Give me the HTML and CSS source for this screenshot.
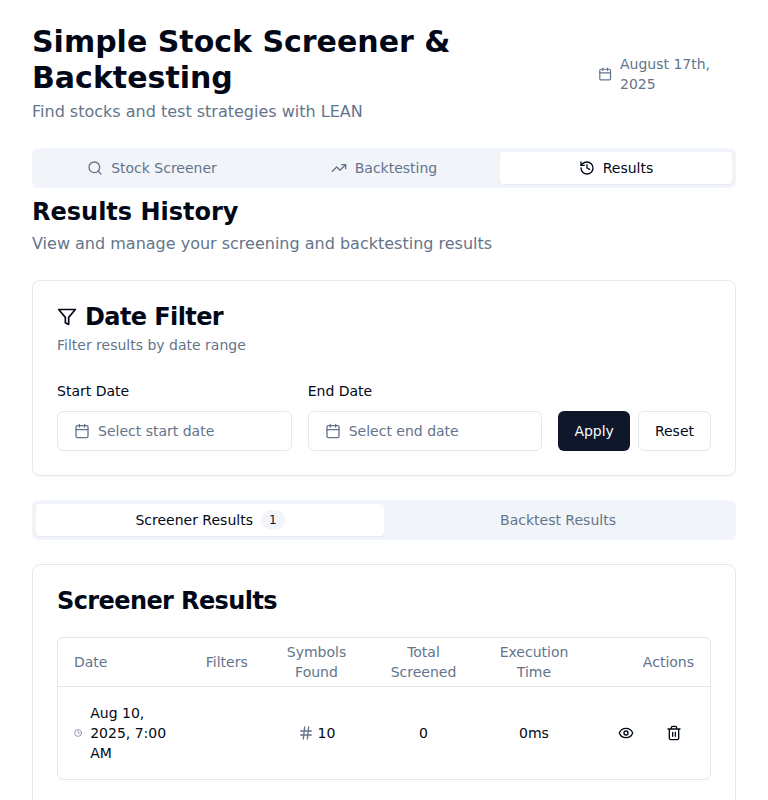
FILE: index.html
```html
<!DOCTYPE html>
<html lang="en">
<head>
<meta charset="utf-8">
<title>Simple Stock Screener &amp; Backtesting</title>
<link rel="stylesheet" href="styles.css">
</head>
<body>
<main class="page">
  <header class="header">
    <div class="heading">
      <h1>Simple Stock Screener &amp; Backtesting</h1>
      <p class="lead">Find stocks and test strategies with LEAN</p>
    </div>
    <div class="today">
      <svg class="icon icon-today" viewBox="0 0 24 24"><path d="M8 2v4M16 2v4"/><rect width="18" height="18" x="3" y="4" rx="2"/><path d="M3 10h18"/></svg>
      <span>August 17th, 2025</span>
    </div>
  </header>

  <nav class="tabs tabs-three">
    <button class="tab"><svg class="icon" viewBox="0 0 24 24"><circle cx="11" cy="11" r="8"/><path d="m21 21-4.3-4.3"/></svg>Stock Screener</button>
    <button class="tab"><svg class="icon" viewBox="0 0 24 24"><path d="M22 7 13.5 15.5 8.500 10.500 2 17"/><path d="M16 7h6v6"/></svg>Backtesting</button>
    <button class="tab active"><svg class="icon" viewBox="0 0 24 24"><path d="M3 12a9 9 0 1 0 9-9 9.750 9.750 0 0 0-6.740 2.740L3 8"/><path d="M3 3v5h5M12 7v5l4 2"/></svg>Results</button>
  </nav>

  <section class="intro">
    <h2>Results History</h2>
    <p class="lead">View and manage your screening and backtesting results</p>
  </section>

  <section class="card">
    <h3><svg class="icon icon-filter" viewBox="0 0 24 24"><path d="M22 3H2l8 9.460V19l4 2v-8.540L22 3z"/></svg>Date Filter</h3>
    <p class="description">Filter results by date range</p>
    <div class="filters">
      <div class="field">
        <label>Start Date</label>
        <button class="button outline picker"><svg class="icon" viewBox="0 0 24 24"><path d="M8 2v4M16 2v4"/><rect width="18" height="18" x="3" y="4" rx="2"/><path d="M3 10h18"/></svg>Select start date</button>
      </div>
      <div class="field">
        <label>End Date</label>
        <button class="button outline picker"><svg class="icon" viewBox="0 0 24 24"><path d="M8 2v4M16 2v4"/><rect width="18" height="18" x="3" y="4" rx="2"/><path d="M3 10h18"/></svg>Select end date</button>
      </div>
      <div class="actions">
        <button class="button primary">Apply</button>
        <button class="button outline">Reset</button>
      </div>
    </div>
  </section>

  <nav class="tabs tabs-two">
    <button class="tab active">Screener Results<span class="badge">1</span></button>
    <button class="tab">Backtest Results</button>
  </nav>

  <section class="card results">
    <h3>Screener Results</h3>
    <div class="table-frame">
      <table>
        <colgroup><col class="col-date"><col class="col-filters"><col class="col-symbols"><col class="col-total"><col class="col-time"><col></colgroup>
        <thead>
          <tr><th class="left">Date</th><th class="left">Filters</th><th>Symbols Found</th><th>Total Screened</th><th>Execution Time</th><th class="right">Actions</th></tr>
        </thead>
        <tbody>
          <tr>
            <td class="left"><div class="date"><svg class="icon icon-clock" viewBox="0 0 24 24"><circle cx="12" cy="12" r="10"/><path d="M12 6v6l4 2"/></svg><span>Aug 10, 2025, 7:00 AM</span></div></td>
            <td></td>
            <td><div class="count"><svg class="icon" viewBox="0 0 24 24"><path d="M4 9h16M4 15h16M10 3 8 21M16 3l-2 18"/></svg>10</div></td>
            <td>0</td>
            <td>0ms</td>
            <td><div class="row-actions">
              <button class="icon-button" aria-label="View"><svg class="icon" viewBox="0 0 24 24"><path d="M2.062 12.348a1 1 0 0 1 0-.696 10.750 10.750 0 0 1 19.876 0 1 1 0 0 1 0 .696 10.750 10.750 0 0 1-19.876 0"/><circle cx="12" cy="12" r="3"/></svg></button>
              <button class="icon-button" aria-label="Delete"><svg class="icon" viewBox="0 0 24 24"><path d="M3 6h18M19 6v14c0 1-1 2-2 2H7c-1 0-2-1-2-2V6M8 6V4c0-1 1-2 2-2h4c1 0 2 1 2 2v2M10 11v6M14 11v6"/></svg></button>
            </div></td>
          </tr>
        </tbody>
      </table>
    </div>
  </section>
</main>
</body>
</html>
```
FILE: styles.css
```css
* { box-sizing: border-box; }
html { overflow: hidden; }
body {
  margin: 0;
  height: 800px;
  overflow: hidden;
  background: #fff;
  color: #020817;
  font: 16px/24px "DejaVu Sans", sans-serif;
}
h1, h2, h3, p { margin: 0; }
button { font: inherit; color: inherit; border: 0; background: none; padding: 0; }
.page { padding: 24px 32px; }
.icon {
  width: 16px;
  height: 16px;
  flex: none;
  fill: none;
  stroke: currentColor;
  stroke-width: 2;
  stroke-linecap: round;
  stroke-linejoin: round;
}
.header { display: flex; justify-content: space-between; align-items: center; }
.heading { width: 500px; }
h1 { font-size: 30px; line-height: 36px; }
.lead { margin-top: 4px; color: #64748b; }
.today {
  display: flex;
  align-items: center;
  gap: 8px;
  width: 138.3px;
  font-size: 14px;
  line-height: 20px;
  color: #64748b;
}
.icon-today { width: 14.3px; }

.tabs {
  display: grid;
  height: 40px;
  margin-top: 24px;
  padding: 4px;
  border-radius: 6px;
  background: #f1f5f9;
  color: #64748b;
  font-size: 14px;
  line-height: 20px;
}
.tabs-three { grid-template-columns: repeat(3, 1fr); }
.tabs-two { grid-template-columns: repeat(2, 1fr); }
.tab { display: flex; align-items: center; justify-content: center; gap: 8px; border-radius: 4px; }
.tab.active { background: #fff; color: #020817; box-shadow: 0 1px 2px rgba(0, 0, 0, .05); }
.badge { padding: 2px 8px; border-radius: 10px; background: #f1f5f9; color: #0f172a; font-size: 12px; line-height: 16px; }

.intro { margin-top: 8px; }
h2 { font-size: 24px; line-height: 32px; }

.card {
  margin-top: 24px;
  padding: 24px;
  border: 1px solid #e2e8f0;
  border-radius: 8px;
  box-shadow: 0 1px 2px rgba(0, 0, 0, .05);
}
h3 { display: flex; align-items: center; gap: 8px; font-size: 24px; line-height: 24px; letter-spacing: -0.6px; }
.icon-filter { width: 20px; height: 20px; }
.description { margin-top: 6px; font-size: 14px; line-height: 20px; color: #64748b; }
.filters { display: flex; align-items: flex-end; gap: 16px; margin-top: 24px; font-size: 14px; }
.field { flex: 1; display: flex; flex-direction: column; gap: 8px; }
.actions { display: flex; gap: 8px; }
.button { display: flex; align-items: center; height: 40px; padding: 0 16px; border-radius: 6px; line-height: 20px; }
.outline { border: 1px solid #e2e8f0; background: #fff; }
.primary { background: #0f172a; color: #f8fafc; }
.picker { gap: 8px; color: #64748b; }

.results { height: 300px; }
.table-frame { margin-top: 24px; border: 1px solid #e2e8f0; border-radius: 6px; }
table { width: 100%; table-layout: fixed; border-spacing: 0; font-size: 14px; line-height: 20px; text-align: center; }
.col-date { width: 131.8px; }
.col-filters { width: 74.2px; }
.col-symbols { width: 105px; }
.col-total { width: 109px; }
.col-time { width: 112px; }
th { height: 49px; padding: 0 16px; border-bottom: 1px solid #e2e8f0; color: #64748b; font-weight: 400; }
td { height: 92px; padding: 16px; }
.left { text-align: left; }
.right { text-align: right; }
.date { display: flex; align-items: center; gap: 8px; }
.icon-clock { width: 8.2px; color: #64748b; }
.count { display: flex; align-items: center; justify-content: center; gap: 4px; }
.count .icon { color: #64748b; }
.row-actions { display: flex; justify-content: flex-end; gap: 8px; }
.icon-button { display: flex; align-items: center; justify-content: center; width: 40px; height: 36px; }
```
